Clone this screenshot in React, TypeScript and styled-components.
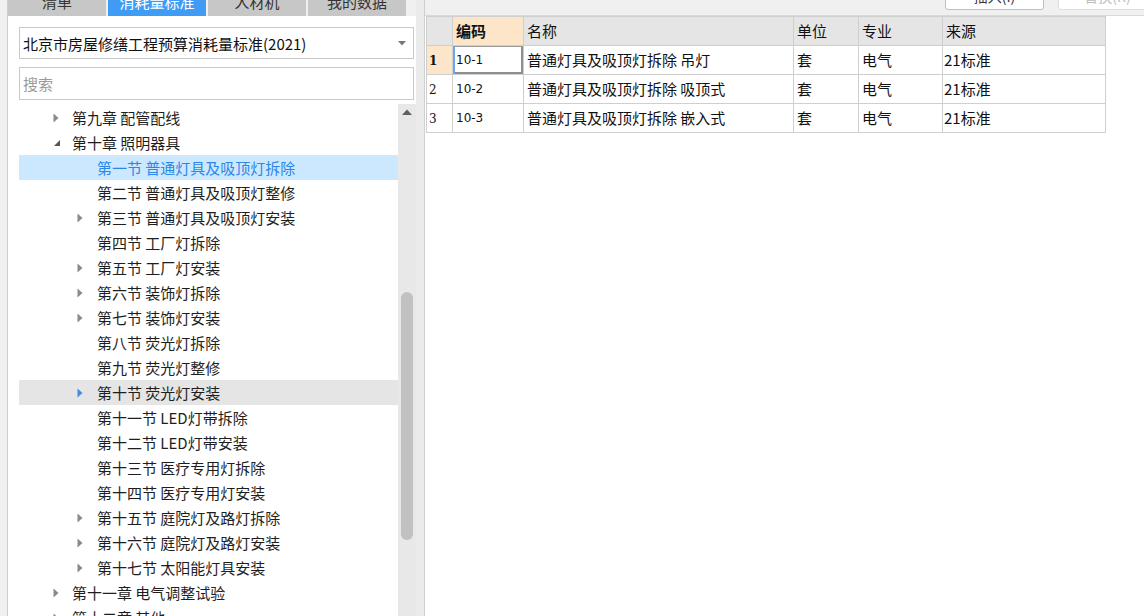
import styled, { createGlobalStyle } from 'styled-components';

const GlobalStyle = createGlobalStyle`
	html,
	body {
		margin: 0;
		padding: 0;
		background: #f0f0f0;
		font-family: 'Noto Sans CJK SC', 'Noto Sans', sans-serif;
		color: #222;
	}
`;

interface TreeNode {
	label: string;
	level: 0 | 1;
	arrow: 'none' | 'closed' | 'open';
	state?: 'selected' | 'hover';
}

const treeNodes: TreeNode[] = [
	{ label: '第九章 配管配线', level: 0, arrow: 'closed' },
	{ label: '第十章 照明器具', level: 0, arrow: 'open' },
	{ label: '第一节 普通灯具及吸顶灯拆除', level: 1, arrow: 'none', state: 'selected' },
	{ label: '第二节 普通灯具及吸顶灯整修', level: 1, arrow: 'none' },
	{ label: '第三节 普通灯具及吸顶灯安装', level: 1, arrow: 'closed' },
	{ label: '第四节 工厂灯拆除', level: 1, arrow: 'none' },
	{ label: '第五节 工厂灯安装', level: 1, arrow: 'closed' },
	{ label: '第六节 装饰灯拆除', level: 1, arrow: 'closed' },
	{ label: '第七节 装饰灯安装', level: 1, arrow: 'closed' },
	{ label: '第八节 荧光灯拆除', level: 1, arrow: 'none' },
	{ label: '第九节 荧光灯整修', level: 1, arrow: 'none' },
	{ label: '第十节 荧光灯安装', level: 1, arrow: 'closed', state: 'hover' },
	{ label: '第十一节 LED灯带拆除', level: 1, arrow: 'none' },
	{ label: '第十二节 LED灯带安装', level: 1, arrow: 'none' },
	{ label: '第十三节 医疗专用灯拆除', level: 1, arrow: 'none' },
	{ label: '第十四节 医疗专用灯安装', level: 1, arrow: 'none' },
	{ label: '第十五节 庭院灯及路灯拆除', level: 1, arrow: 'closed' },
	{ label: '第十六节 庭院灯及路灯安装', level: 1, arrow: 'closed' },
	{ label: '第十七节 太阳能灯具安装', level: 1, arrow: 'closed' },
	{ label: '第十一章 电气调整试验', level: 0, arrow: 'closed' },
	{ label: '第十二章 其他', level: 0, arrow: 'closed' },
];

const rows = [
	{ code: '10-1', name: '普通灯具及吸顶灯拆除 吊灯', unit: '套', major: '电气', source: '21标准' },
	{ code: '10-2', name: '普通灯具及吸顶灯拆除 吸顶式', unit: '套', major: '电气', source: '21标准' },
	{ code: '10-3', name: '普通灯具及吸顶灯拆除 嵌入式', unit: '套', major: '电气', source: '21标准' },
];

const tabs = ['清单', '消耗量标准', '人材机', '我的数据'];

function TreeArrow({ kind, active }: { kind: TreeNode['arrow']; active: boolean }) {
	if (kind === 'none') return null;
	if (kind === 'open') {
		return (
			<svg width="8" height="8" viewBox="0 0 8 8">
				<polygon points="7,1 7,7 1,7" fill="#555" />
			</svg>
		);
	}
	return (
		<svg width="6" height="10" viewBox="0 0 6 10">
			<polygon points="0.5,0.5 5.5,5 0.5,9.5" fill={active ? '#3d8ee8' : '#8a8a8a'} />
		</svg>
	);
}

function App() {
	return (
		<>
			<GlobalStyle />
			<Screen>
				<LeftPane>
					<TabBar>
						{tabs.map((t, i) => (
							<Tab key={t} $active={i === 1}>
								{t}
							</Tab>
						))}
					</TabBar>
					<LeftBody>
						<Select>
							<span>北京市房屋修缮工程预算消耗量标准(2021)</span>
							<svg width="8" height="5" viewBox="0 0 8 5">
								<polygon points="0,0 8,0 4,4.5" fill="#777" />
							</svg>
						</Select>
						<Search placeholder="搜索" />
						<TreeArea>
							<TreeList>
								{treeNodes.map((n) => (
									<TreeRow key={n.label} $level={n.level} $state={n.state}>
										<ArrowBox $level={n.level}>
											<TreeArrow kind={n.arrow} active={n.state === 'hover'} />
										</ArrowBox>
										<span>{n.label}</span>
									</TreeRow>
								))}
							</TreeList>
							<ScrollBar>
								<ScrollUp>
									<svg width="10" height="6" viewBox="0 0 10 6">
										<polygon points="0,6 10,6 5,0.5" fill="#606060" />
									</svg>
								</ScrollUp>
								<Thumb />
							</ScrollBar>
						</TreeArea>
					</LeftBody>
				</LeftPane>
				<Splitter />
				<RightPane>
					<ActionStrip>
						<ActionButton>插入(I)</ActionButton>
						<ActionButton $disabled>替换(R)</ActionButton>
					</ActionStrip>
					<GridArea>
						<Grid>
							<colgroup>
								<col style={{ width: 26 }} />
								<col style={{ width: 71 }} />
								<col style={{ width: 270 }} />
								<col style={{ width: 65 }} />
								<col style={{ width: 84 }} />
								<col style={{ width: 163 }} />
							</colgroup>
							<thead>
								<tr>
									<HeadCell />
									<HeadCell $current>编码</HeadCell>
									<HeadCell>名称</HeadCell>
									<HeadCell>单位</HeadCell>
									<HeadCell>专业</HeadCell>
									<HeadCell>来源</HeadCell>
								</tr>
							</thead>
							<tbody>
								{rows.map((r, i) => (
									<tr key={r.code}>
										<RowNumCell $current={i === 0}>{i + 1}</RowNumCell>
										<CodeCell $focused={i === 0}>{r.code}</CodeCell>
										<Cell>{r.name}</Cell>
										<Cell>{r.unit}</Cell>
										<Cell>{r.major}</Cell>
										<SourceCell>{r.source}</SourceCell>
									</tr>
								))}
							</tbody>
						</Grid>
					</GridArea>
				</RightPane>
			</Screen>
		</>
	);
}

export default App;

const Screen = styled.div`
	display: flex;
	height: 616px;
	padding-left: 7px;
	overflow: hidden;
	box-sizing: border-box;
`;

const LeftPane = styled.div`
	display: flex;
	flex-direction: column;
	width: 409px;
	flex-shrink: 0;
	border-left: 1px solid #cdcdcd;
	box-sizing: border-box;
`;

const TabBar = styled.div`
	display: flex;
	gap: 2px;
	height: 16px;
	overflow: hidden;
	align-items: flex-end;
	background: #f0f0f0;
`;

const Tab = styled.div<{ $active?: boolean }>`
	width: 98px;
	height: 30px;
	flex-shrink: 0;
	display: flex;
	align-items: center;
	justify-content: center;
	font-size: 15px;
	background: ${(p) => (p.$active ? '#3f9bf4' : '#c7c7c7')};
	color: ${(p) => (p.$active ? '#fff' : '#333')};
`;

const LeftBody = styled.div`
	flex: 1;
	display: flex;
	flex-direction: column;
	background: #fff;
	padding: 11px 0 0 11px;
	min-height: 0;
`;

const Select = styled.div`
	display: flex;
	align-items: center;
	justify-content: space-between;
	height: 32px;
	margin-right: 2px;
	padding: 0 7px 0 3px;
	border: 1px solid #c9c9c9;
	box-sizing: border-box;
	font-size: 15px;
	color: #111;
`;

const Search = styled.input`
	height: 33px;
	margin: 8px 2px 0 0;
	padding: 0 3px;
	border: 1px solid #c9c9c9;
	box-sizing: border-box;
	font-family: inherit;
	font-size: 15px;
	outline: none;

	&::placeholder {
		color: #9a9a9a;
	}
`;

const TreeArea = styled.div`
	flex: 1;
	display: flex;
	margin-top: 4px;
	min-height: 0;
	overflow: hidden;
`;

const TreeList = styled.div`
	flex: 1;
	display: flex;
	flex-direction: column;
	padding-top: 1px;
`;

const TreeRow = styled.div<{ $level: number; $state?: 'selected' | 'hover' }>`
	display: flex;
	align-items: center;
	height: 25px;
	flex-shrink: 0;
	padding-left: ${(p) => 31 + p.$level * 25}px;
	font-size: 15px;
	white-space: nowrap;
	background: ${(p) => (p.$state === 'selected' ? '#cce8ff' : p.$state === 'hover' ? '#e5e5e5' : 'transparent')};
	color: ${(p) => (p.$state === 'selected' ? '#2d86e6' : '#1e1e1e')};
`;

const ArrowBox = styled.span<{ $level: number }>`
	display: flex;
	align-items: center;
	width: 22px;
	height: 25px;
	padding-left: ${(p) => (p.$level === 0 ? 3 : 2)}px;
	box-sizing: border-box;
`;

const ScrollBar = styled.div`
	width: 18px;
	flex-shrink: 0;
	display: flex;
	flex-direction: column;
	align-items: center;
	background: #e8e8e8;
`;

const ScrollUp = styled.div`
	height: 16px;
	display: flex;
	align-items: center;
	justify-content: center;
`;

const Thumb = styled.div`
	width: 12px;
	height: 248px;
	margin-top: 172px;
	border-radius: 6px;
	background: #c1c1c1;
`;

const Splitter = styled.div`
	width: 8px;
	flex-shrink: 0;
	background: #ebebeb;
	border-right: 1px solid #cfcfcf;
`;

const RightPane = styled.div`
	flex: 1;
	display: flex;
	flex-direction: column;
	min-width: 0;
`;

const ActionStrip = styled.div`
	height: 16px;
	display: flex;
	gap: 14px;
	padding-left: 520px;
	overflow: hidden;
	align-items: flex-end;
	padding-bottom: 5px;
	box-sizing: border-box;
	background: #f0f0f0;
	border-bottom: 1px solid #d9d9d9;
`;

const ActionButton = styled.div<{ $disabled?: boolean }>`
	width: 99px;
	height: 28px;
	flex-shrink: 0;
	display: flex;
	align-items: center;
	justify-content: center;
	border: 1px solid ${(p) => (p.$disabled ? '#dedede' : '#bdbdbd')};
	border-radius: 3px;
	background: #fff;
	font-size: 14px;
	color: ${(p) => (p.$disabled ? '#bdbdbd' : '#333')};
	box-sizing: border-box;
`;

const GridArea = styled.div`
	flex: 1;
	background: #fff;
	padding-left: 1px;
`;

const Grid = styled.table`
	border-collapse: collapse;
	table-layout: fixed;
	width: 679px;
	font-size: 15px;
	color: #111;

	th,
	td {
		height: 29px;
		border: 1px solid #cfcfcf;
		padding: 0 3px;
		line-height: 18px;
		text-align: left;
		vertical-align: middle;
		white-space: nowrap;
		overflow: hidden;
		box-sizing: border-box;
	}
`;

const HeadCell = styled.th<{ $current?: boolean }>`
	font-weight: ${(p) => (p.$current ? 700 : 400)};
	background: ${(p) => (p.$current ? '#fde5c9' : '#e5e5e5')};
`;

const Cell = styled.td`
	background: #fff;
`;

const RowNumCell = styled(Cell)<{ $current?: boolean }>`
	font-family: 'DejaVu Serif', serif;
	font-size: 12px;
	font-weight: ${(p) => (p.$current ? 700 : 400)};
	background: ${(p) => (p.$current ? '#fde5c9' : '#fff')};

	&& {
		padding: 2px 0 0 2px;
	}
`;

const CodeCell = styled(Cell)<{ $focused?: boolean }>`
	font-family: 'DejaVu Sans', sans-serif;
	font-size: 12px;
	box-shadow: ${(p) => (p.$focused ? 'inset 2px 0 0 #6aa7ec, inset 0 1px 0 #9a9a9a, inset -2px -2px 0 #8f8f8f' : 'none')};
`;

const SourceCell = styled(Cell)`
	&& {
		padding-left: 1px;
	}
`;
